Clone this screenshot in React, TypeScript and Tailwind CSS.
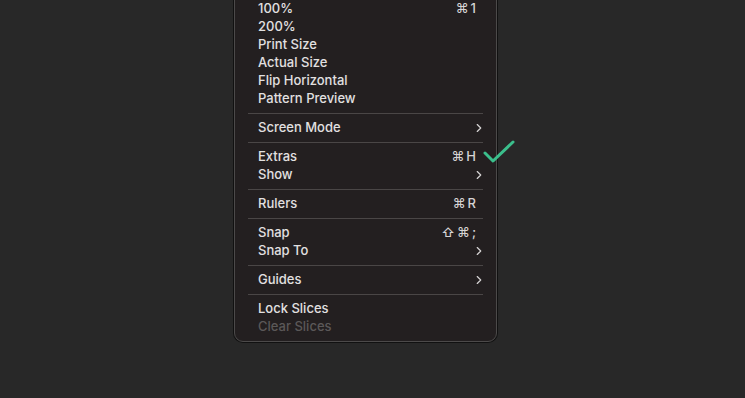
import { ChevronRight } from "lucide-react";

type Item = { label: string; shortcut?: string; submenu?: boolean; disabled?: boolean };

const groups: Item[][] = [
  [
    { label: "100%", shortcut: "⌘1" },
    { label: "200%" },
    { label: "Print Size" },
    { label: "Actual Size" },
    { label: "Flip Horizontal" },
    { label: "Pattern Preview" },
  ],
  [{ label: "Screen Mode", submenu: true }],
  [
    { label: "Extras", shortcut: "⌘H" },
    { label: "Show", submenu: true },
  ],
  [{ label: "Rulers", shortcut: "⌘R" }],
  [
    { label: "Snap", shortcut: "⇧⌘;" },
    { label: "Snap To", submenu: true },
  ],
  [{ label: "Guides", submenu: true }],
  [
    { label: "Lock Slices" },
    { label: "Clear Slices", disabled: true },
  ],
];

export default function App() {
  return (
    <div
      className="w-[745px] h-[398px] bg-[#282828] overflow-hidden"
      style={{ fontFamily: "Inter, 'Liberation Sans', sans-serif" }}
    >
      <div className="relative ml-[234px] w-[263px] -mt-[7px]">
        {/* Menu */}
        <div className="rounded-b-[9px] bg-[#231f20] border border-[#4c4a4a] shadow-[0_0_0_1px_#111] pt-[6px] pb-[5px]">
          {groups.map((group, gi) => (
            <div key={gi}>
              {gi > 0 && (
                <div className="py-[5px] px-[13px]">
                  <div className="h-px bg-[#4a4646]" />
                </div>
              )}
              {group.map((item) => (
                <div
                  key={item.label}
                  className={`h-[18px] flex items-center justify-between pl-[23px] pr-[10px] text-[13px] font-medium ${
                    item.disabled ? "text-[#5b5858]" : "text-[#e2e0e0]"
                  }`}
                >
                  <span>{item.label}</span>
                  {item.shortcut && (
                    <span className="pr-[8px] tracking-[2px] text-[#d6d4d4]">
                      {item.shortcut}
                    </span>
                  )}
                  {item.submenu && (
                    <ChevronRight className="w-[14px] h-[14px] text-[#d6d4d4]" strokeWidth={2} />
                  )}
                </div>
              ))}
            </div>
          ))}
        </div>

        {/* Check mark */}
        <svg
          className="absolute left-[249px] top-[147px]"
          width="32"
          height="24"
          viewBox="0 0 32 24"
          fill="none"
        >
          <path
            d="M2 13 L10 21 L30 2"
            stroke="#3bbf8c"
            strokeWidth="3"
            strokeLinecap="round"
            strokeLinejoin="round"
          />
        </svg>
      </div>
    </div>
  );
}
